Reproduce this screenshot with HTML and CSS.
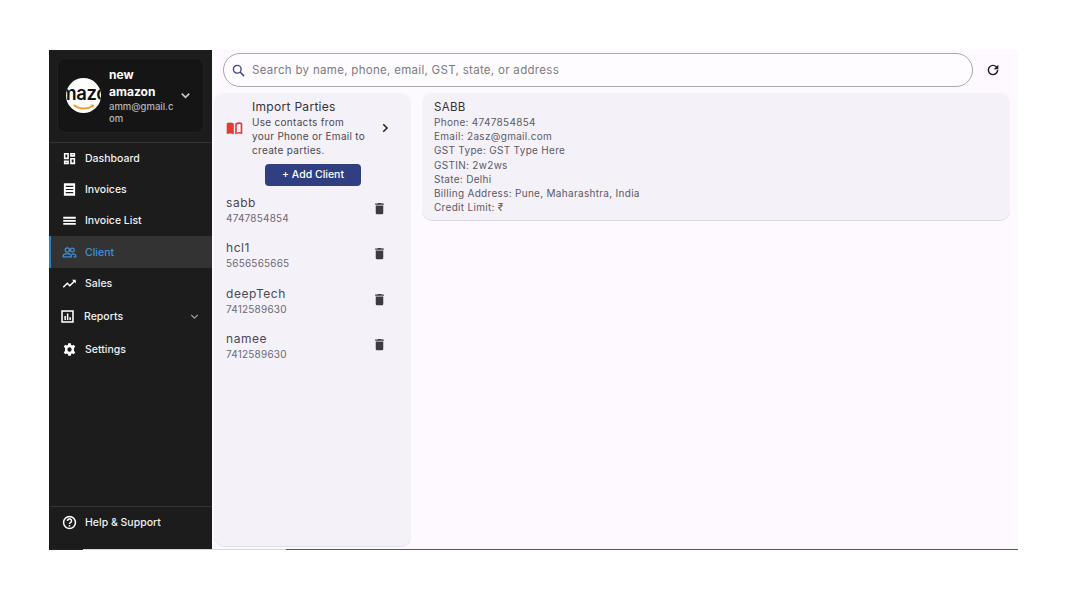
FILE: index.html
```html
<!DOCTYPE html>
<html lang="en">
<head>
<meta charset="utf-8">
<title>Clients</title>
<link rel="stylesheet" href="styles.css">
</head>
<body>
<div class="app">
  <aside class="sidebar">
    <div class="profile-wrap">
      <div class="profile">
        <div class="avatar">
          <span class="avatar-text">mazo</span>
          <svg class="smile" viewBox="0 0 30 10"><path d="M2 2.500C9 8 19 8.500 26 3.500" fill="none" stroke="#f0a030" stroke-width="2.400"/><path d="M23 2l5 .2-1.600 4.400z" fill="#f0a030"/></svg>
        </div>
        <div class="profile-text">
          <div class="profile-name">new amazon</div>
          <div class="profile-mail">amm@gmail.c<wbr>om</div>
        </div>
        <svg class="chev-profile" viewBox="0 0 24 24"><path d="M6 9l6 6 6-6" fill="none" stroke="#c8c8c8" stroke-width="2.600"/></svg>
      </div>
    </div>
    <nav class="nav">
      <a class="item h31"><svg class="ico" viewBox="0 0 24 24"><path fill="#fff" d="M3 3h8v10H3zM13 3h8v6h-8zM13 11h8v10h-8zM3 15h8v6H3z"/><path fill="#1c1c1c" d="M5.500 5.500h3v5h-3zM15.500 5.500h3v1h-3zM15.500 13.500h3v5h-3zM5.500 17.500h3v1h-3z"/></svg><span>Dashboard</span></a>
      <a class="item h31"><svg class="ico" viewBox="0 0 24 24"><path fill="#fff" d="M3 2h18v20H3z"/><path fill="#1c1c1c" d="M6 6h12v1.800H6zM6 11h12v1.800H6zM6 16h12v1.800H6z"/></svg><span>Invoices</span></a>
      <a class="item h31"><svg class="ico" viewBox="0 0 24 24"><path fill="#fff" d="M2 6h20v3H2zM2 11h20v3H2zM2 16h20v2.600H2z"/></svg><span>Invoice List</span></a>
      <a class="item active"><svg class="ico" viewBox="0 0 24 24"><g fill="none" stroke="#3f8fd8" stroke-width="2"><circle cx="8.500" cy="8" r="3.400"/><circle cx="16.500" cy="8" r="3"/><path d="M2 19v-1.600c0-2.400 3-3.600 6.500-3.600s6.500 1.200 6.500 3.600V19zM16 14c3 0 6 1 6 3.400V19h-3.500"/></g></svg><span>Client</span></a>
      <a class="item h31"><svg class="ico" viewBox="0 0 24 24"><path fill="none" stroke="#fff" stroke-width="2.400" d="M2 18l6.500-6.500 4 4L20.500 7.500"/><path fill="#fff" d="M16 6h6v6z"/></svg><span>Sales</span></a>
      <a class="item reports"><svg class="ico ico-lg" viewBox="0 0 24 24"><path fill="#fff" d="M2 2h20v20H2z"/><path fill="#1c1c1c" d="M4.500 4.500h15v15h-15z"/><path fill="#fff" d="M7 11h2.400v6.500H7zM11 7h2.400v10.500H11zM15 13h2.400v4.500H15z"/></svg><span class="grow">Reports</span><svg class="chev-nav" viewBox="0 0 24 24"><path d="M6 9l6 6 6-6" fill="none" stroke="#a0a0a0" stroke-width="2.600"/></svg></a>
      <a class="item settings"><svg class="ico" viewBox="0 0 24 24"><path fill="#fff" fill-rule="evenodd" d="M10 2h4l.6 2.800 1.700.8 2.500-1.300 2.400 3.400-2 1.900v4.800l2 1.900-2.400 3.400-2.500-1.300-1.700.8L14 22h-4l-.6-2.800-1.700-.8-2.500 1.300-2.400-3.400 2-1.900V9.600l-2-1.900 2.400-3.400 2.500 1.300 1.700-.8zM12 8.500a3.500 3.500 0 100 7 3.500 3.500 0 000-7z"/></svg><span>Settings</span></a>
    </nav>
    <div class="help-wrap">
      <a class="item help"><svg class="ico" viewBox="0 0 24 24"><circle cx="12" cy="12" r="9.500" fill="none" stroke="#fff" stroke-width="2.400"/><path fill="none" stroke="#fff" stroke-width="2.400" d="M8.800 9.500a3.200 3.200 0 116 1.400c-.8 1.200-2.800 1.800-2.800 3.600"/><path fill="#fff" d="M10.800 16h2.400v2.400h-2.400z"/></svg><span>Help &amp; Support</span></a>
    </div>
  </aside>

  <main class="main">
    <div class="topbar">
      <div class="search">
        <svg class="search-ico" viewBox="0 0 24 24"><circle cx="10" cy="10" r="6.200" fill="none" stroke="#3a4a8c" stroke-width="2.200"/><path d="M14.500 14.500L21 21" stroke="#3a4a8c" stroke-width="2.400"/></svg>
        <span class="placeholder">Search by name, phone, email, GST, state, or address</span>
      </div>
      <svg class="refresh" viewBox="0 0 24 24"><path fill="#1c1c1c" d="M17.650 6.350A7.960 7.960 0 0012 4a8 8 0 108 8h-2.100a5.900 5.900 0 11-1.700-4.200L13 11h7V4z"/></svg>
    </div>
    <div class="panels">
      <section class="list">
        <div class="import">
          <svg class="book" viewBox="0 0 24 20"><path fill="#e53935" d="M0 2c3-1.600 7.500-1.600 11 .4V19C7.500 17.400 3 17.400 0 18.600z"/><path fill="#e53935" fill-rule="evenodd" d="M24 2C21-.4 16.500-.4 13 2.400V19c3.500-1.600 8-1.600 11-.4zM15.500 4c2-1.200 4.500-1.400 6-.7v12.500c-1.500-.6-4-.4-6 .6z"/></svg>
          <div class="import-text">
            <div class="import-title">Import Parties</div>
            <div class="import-desc">Use contacts from your Phone or Email to create parties.</div>
          </div>
          <svg class="chev-right" viewBox="0 0 24 24"><path d="M9 5.500l6.500 6.500L9 18.500" fill="none" stroke="#2a2a2a" stroke-width="2.800"/></svg>
        </div>
        <button class="add">+ Add Client</button>
        <div class="client"><div class="client-info"><div class="client-name">sabb</div><div class="client-phone">4747854854</div></div><svg class="trash" viewBox="0 0 24 24"><path fill="#3c3a44" d="M6 19a2 2 0 002 2h8a2 2 0 002-2V7H6zM19 4h-3.500l-1-1h-5l-1 1H5v2h14z"/></svg></div>
        <div class="client"><div class="client-info"><div class="client-name">hcl1</div><div class="client-phone">5656565665</div></div><svg class="trash" viewBox="0 0 24 24"><path fill="#3c3a44" d="M6 19a2 2 0 002 2h8a2 2 0 002-2V7H6zM19 4h-3.500l-1-1h-5l-1 1H5v2h14z"/></svg></div>
        <div class="client"><div class="client-info"><div class="client-name">deepTech</div><div class="client-phone">7412589630</div></div><svg class="trash" viewBox="0 0 24 24"><path fill="#3c3a44" d="M6 19a2 2 0 002 2h8a2 2 0 002-2V7H6zM19 4h-3.500l-1-1h-5l-1 1H5v2h14z"/></svg></div>
        <div class="client"><div class="client-info"><div class="client-name">namee</div><div class="client-phone">7412589630</div></div><svg class="trash" viewBox="0 0 24 24"><path fill="#3c3a44" d="M6 19a2 2 0 002 2h8a2 2 0 002-2V7H6zM19 4h-3.500l-1-1h-5l-1 1H5v2h14z"/></svg></div>
      </section>
      <section class="detail">
        <div class="detail-title">SABB</div>
        <div class="detail-line">Phone: 4747854854</div>
        <div class="detail-line">Email: 2asz@gmail.com</div>
        <div class="detail-line">GST Type: GST Type Here</div>
        <div class="detail-line">GSTIN: 2w2ws</div>
        <div class="detail-line">State: Delhi</div>
        <div class="detail-line">Billing Address: Pune, Maharashtra, India</div>
        <div class="detail-line">Credit Limit: ₹</div>
      </section>
    </div>
  </main>
</div>
</body>
</html>
```
FILE: styles.css
```css
* { box-sizing: border-box; }
html, body { margin: 0; height: 100%; background: #fff; }
body {
  padding: 50px 49px;
  font-family: "Inter", "Noto Sans", "Liberation Sans", sans-serif;
}
.app {
  display: flex;
  width: 969px;
  height: 500px;
  background: #fdf9fe;
  border-bottom: 1px solid;
  border-image: linear-gradient(to right, #222 0 35px, #d8d8d8 35px 238px, #555 238px) 1;
  overflow: hidden;
}
.sidebar {
  width: 163px;
  flex: none;
  background: #1c1c1c;
  display: flex;
  flex-direction: column;
  color: #fff;
}
.profile-wrap {
  height: 93px;
  padding: 8px 8px 0;
  border-bottom: 1px solid #333;
}
.profile {
  height: 75px;
  background: #151515;
  border: 1px solid #222;
  border-radius: 8px;
  display: flex;
  align-items: center;
  padding-left: 8px;
}
.avatar {
  width: 35px;
  height: 35px;
  border-radius: 50%;
  background: #fff;
  flex: none;
  overflow: hidden;
  display: flex;
  flex-direction: column;
  align-items: center;
}
.avatar-text {
  font-size: 18.500px;
  line-height: 20px;
  font-weight: 600;
  color: #111;
  margin-top: 5px;
  white-space: nowrap;
  letter-spacing: -.4px;
}
.smile { width: 26px; height: 8px; flex: none; }
.profile-text { width: 66px; margin-left: 8px; flex: none; }
.profile-name { font-size: 12px; font-weight: 700; line-height: 17px; }
.profile-mail { font-size: 9.500px; line-height: 12.500px; color: #b4b4b4; font-weight: 500; margin-top: 1px; }
.chev-profile { width: 15px; height: 15px; margin-left: 3px; flex: none; }
.nav { flex: 1; display: flex; flex-direction: column; }
.item {
  display: flex;
  align-items: center;
  height: 32px;
  padding-left: 13px;
  font-size: 10.500px;
  font-weight: 500;
  color: #f0f0f0;
}
.item.h31 { height: 31px; }
.ico { width: 15px; height: 15px; flex: none; margin-right: 8px; }
.ico-lg { margin-left: -2px; margin-right: 9px; }
.active {
  background: #333;
  border-left: 2px solid #2f7fc4;
  padding-left: 11px;
  color: #3f8fd8;
}
.reports { height: 35px; }
.item.settings { height: 30px; }
.item.help { height: 30px; }
.grow { flex: 1; }
.chev-nav { width: 13px; height: 13px; margin-right: 11px; }
.help-wrap { height: 43px; border-top: 1px solid #333; }
.main { flex: 1; display: flex; flex-direction: column; min-width: 0; }
.topbar { display: flex; align-items: center; padding: 3px 0 6px 11px; height: 43px; flex: none; }
.search {
  width: 750px;
  height: 34px;
  border: 1px solid #a8a8b0;
  border-radius: 17px;
  background: #fffcff;
  display: flex;
  align-items: center;
  padding-left: 7px;
}
.search-ico { width: 15px; height: 15px; flex: none; }
.placeholder { margin-left: 6px; font-size: 11.500px; color: #7c7a84; letter-spacing: .3px; }
.refresh { width: 16px; height: 16px; margin-left: 12px; flex: none; }
.panels { flex: 1; display: flex; min-height: 0; align-items: flex-start; padding: 0 8px 2px 2px; gap: 11px; }
.list {
  width: 197px;
  height: 454px;
  flex: none;
  background: #f5f1f9;
  border-radius: 10px;
  border-bottom: 1px solid #e2dee6;
  display: flex;
  flex-direction: column;
}
.import { display: flex; align-items: center; padding: 4px 14px 1px 12px; height: 66px; flex: none; }
.book { width: 17px; height: 13px; flex: none; margin-top: 2px; }
.import-text { width: 116px; margin-left: 9px; flex: none; }
.import-title { font-size: 12px; line-height: 15px; color: #35333c; letter-spacing: .3px; }
.import-desc { font-size: 10px; line-height: 14px; color: #4a4852; margin-top: 1px; letter-spacing: .3px; }
.chev-right { width: 14px; height: 14px; margin: 0 0 0 10px; flex: none; }
.add {
  align-self: flex-start;
  margin: 5px 0 1.400px 51px;
  width: 96px;
  height: 22px;
  padding: 0 0 1px;
  background: #2f3f82;
  border: 0;
  border-radius: 4px;
  color: #fff;
  font: 500 10.500px "Inter", "Noto Sans", sans-serif;
}
.client { display: flex; align-items: center; height: 45.300px; padding: 0 24px 0 12px; flex: none; }
.client-info { flex: 1; padding-top: 1px; }
.client-name { font-size: 12px; line-height: 16px; color: #4a4852; letter-spacing: .55px; }
.client-phone { font-size: 10px; line-height: 15px; color: #6c6a72; letter-spacing: .2px; }
.trash { width: 15px; height: 15px; flex: none; margin-bottom: 3px; }
.detail {
  width: 588px;
  height: 128px;
  flex: none;
  background: #f5f1f9;
  border-radius: 10px;
  border-bottom: 1px solid #dcd8e0;
  padding: 7px 12px;
}
.detail-title { font-size: 11.500px; line-height: 15px; color: #35333c; letter-spacing: .3px; }
.detail-line { font-size: 10px; line-height: 14.200px; color: #5c5a62; letter-spacing: .3px; }
```
